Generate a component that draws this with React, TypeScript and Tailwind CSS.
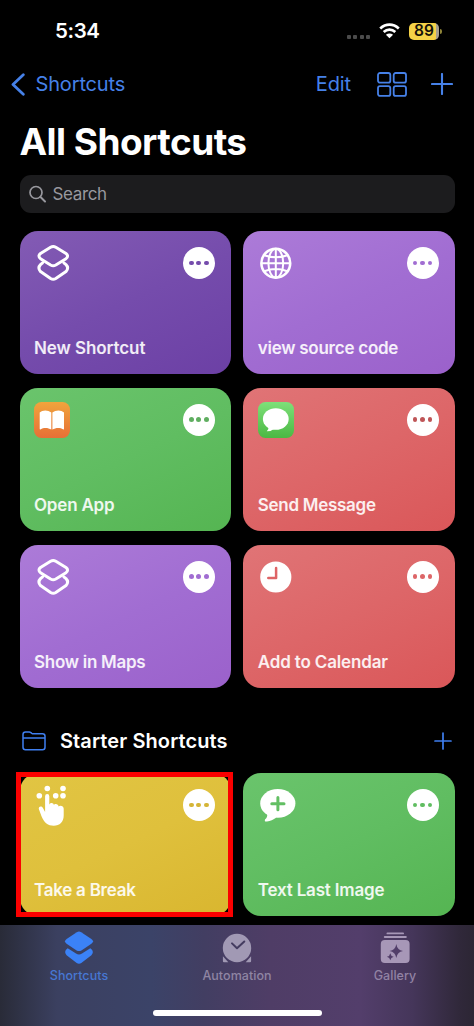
import React from 'react';

type Shortcut = {
  title: string;
  bg: string;
  dots: string;
  tracking: string;
  icon: React.ReactNode;
  highlighted?: boolean;
};

const LayersIcon = () => (
  <svg viewBox="0 0 36 36" className="size-9 overflow-visible" fill="none" stroke="#fff" strokeWidth="3" strokeLinejoin="round" strokeLinecap="round">
    <path d="M16.6 2.2Q19.2 .7 21.8 2.2L32 8.5Q35.2 11 32 13.7L21.8 20Q19.2 21.4 16.6 20L6.5 13.7Q3.4 11 6.5 8.5Z" />
    <path d="M8.6 17.8L6.5 19.6Q3.4 22.8 6.5 26.6L16.6 33.5Q19.2 35.100 21.8 33.5L32 26.6Q35.2 22.8 32 19.6L29.800 17.8" />
  </svg>
);

const GlobeIcon = () => (
  <svg viewBox="0 0 36 36" className="size-9 overflow-visible" fill="none" stroke="#fff" strokeWidth="2">
    <circle cx="17.8" cy="18.2" r="14.4" strokeWidth="2.6" />
    <ellipse cx="17.8" cy="18.2" rx="7.4" ry="14.4" />
    <path d="M17.8 4V32.5M3.4 18.2H32.2M6.3 10.2Q17.8 14.5 29.3 10.2M6.3 26.2Q17.8 21.9 29.3 26.2" />
  </svg>
);

const BooksIcon = () => (
  <svg viewBox="0 0 36 36" className="size-9">
    <defs>
      <linearGradient id="books" x1="0" y1="0" x2="0" y2="1">
        <stop stopColor="#f0a43c" />
        <stop offset="1" stopColor="#e76f36" />
      </linearGradient>
    </defs>
    <rect width="36" height="36" rx="7.5" fill="url(#books)" />
    <path fill="#fff" d="M5.7 10.5C8.5 7.8 14 7.8 17.3 10.5V27.5C14 25.3 9 25.5 6.8 27.3Q5.700 28 5.7 26.8ZM30 10.5C27.2 7.8 21.7 7.8 18.4 10.5V27.5C21.7 25.3 26.7 25.5 28.9 27.3Q30 28 30 26.8Z" />
  </svg>
);

const MessagesIcon = () => (
  <svg viewBox="0 0 36 36" className="size-9">
    <defs>
      <linearGradient id="messages" x1="0" y1="0" x2="0" y2="1">
        <stop stopColor="#7ee079" />
        <stop offset="1" stopColor="#4bb843" />
      </linearGradient>
    </defs>
    <rect width="36" height="36" rx="7.5" fill="url(#messages)" />
    <ellipse cx="17.8" cy="17" rx="12.9" ry="10.8" fill="#fff" />
    <path fill="#fff" d="M10.5 24.5Q11 27.5 8.8 29.3Q13.5 29.4 16.5 26.5Z" />
  </svg>
);

const ClockIcon = () => (
  <svg viewBox="0 0 36 36" className="size-9">
    <circle cx="17.8" cy="18" r="15.6" fill="#fff" />
    <path d="M18.1 9V19H10.3" fill="none" stroke="#de6466" strokeWidth="2.5" strokeLinecap="round" strokeLinejoin="round" />
  </svg>
);

const TapIcon = () => (
  <svg viewBox="0 0 36 36" className="size-9 overflow-visible" fill="#fff">
    <circle cx="13.3" cy="1.5" r="2.8" />
    <circle cx="29" cy="1.5" r="2.8" />
    <circle cx="5.3" cy="8.8" r="2.8" />
    <circle cx="21.7" cy="8.8" r="2.8" />
    <circle cx="29" cy="8.8" r="2.8" />
    <path d="M11.1 9.2A2.1 2.1 0 0 1 15.3 9.2V17.7C15.8 15.3 19.8 15.4 19.9 18.1C20.7 16.2 24.5 16.8 24.6 19.5C26 17.9 29.7 18.7 29.7 21.8V28.5C29.7 35 25.8 38.7 19.7 38.7C14 38.7 10.2 36 7.5 29.3L4.9 22.2C4 19.4 7.5 18.3 8.8 20.7L11.1 25Z" />
  </svg>
);

const BubblePlusIcon = () => (
  <svg viewBox="0 0 36 36" className="size-9 overflow-visible">
    <ellipse cx="19.8" cy="16.4" rx="17.6" ry="14.3" fill="#fff" />
    <path d="M9 26.5Q10 30.3 7 32.4C6.4 34.2 7.2 34.9 9 34.5C12.5 34.2 15 32.8 18.5 30.5Z" fill="#fff" />
    <path d="M19.9 10.6V22.8M13.8 16.7H26" stroke="#62bf63" strokeWidth="3" strokeLinecap="round" />
  </svg>
);

const PURPLE = 'bg-linear-[155deg,#ac7bd8,#a16dd2_50%,#9b61cb]';
const GREEN = 'bg-linear-[155deg,#6ac46c,#60bd61_50%,#55b552]';
const RED = 'bg-linear-[155deg,#e07476,#dd6668_50%,#da5759]';

const allShortcuts: Shortcut[] = [
  { title: 'New Shortcut', bg: 'bg-linear-[155deg,#835bb4,#754cac_50%,#6c40a5]', dots: 'bg-[#754cac]', tracking: 'tracking-[-0.08px]', icon: <LayersIcon /> },
  { title: 'view source code', bg: PURPLE, dots: 'bg-[#a16dd2]', tracking: 'tracking-[-0.25px]', icon: <GlobeIcon /> },
  { title: 'Open App', bg: GREEN, dots: 'bg-[#5fae60]', tracking: 'tracking-[-0.2px]', icon: <BooksIcon /> },
  { title: 'Send Message', bg: RED, dots: 'bg-[#bf5557]', tracking: 'tracking-[-0.28px]', icon: <MessagesIcon /> },
  { title: 'Show in Maps', bg: PURPLE, dots: 'bg-[#a16dd2]', tracking: 'tracking-[-0.28px]', icon: <LayersIcon /> },
  { title: 'Add to Calendar', bg: RED, dots: 'bg-[#dd6668]', tracking: 'tracking-[-0.15px]', icon: <ClockIcon /> },
];

const starterShortcuts: Shortcut[] = [
  { title: 'Take a Break', bg: 'bg-linear-[155deg,#e1c543,#dfc03c_50%,#d9b62f]', dots: 'bg-[#d5b537]', tracking: 'tracking-[-0.25px]', icon: <TapIcon />, highlighted: true },
  { title: 'Text Last Image', bg: GREEN, dots: 'bg-[#60bd61]', tracking: 'tracking-[-0.18px]', icon: <BubblePlusIcon /> },
];

function ShortcutCard({ shortcut }: { shortcut: Shortcut }) {
  const { title, bg, dots, tracking, icon, highlighted } = shortcut;
  return (
    <div className={`relative flex h-[143px] flex-col justify-between rounded-[18px] pt-[14px] pr-4 pb-[14px] pl-[14.5px] ${bg}`}>
      <div className="flex items-start justify-between">
        {icon}
        <button className="mt-0.5 flex size-8 items-center justify-center gap-[2.8px] rounded-full bg-white">
          <span className={`size-[4.8px] rounded-full ${dots}`} />
          <span className={`size-[4.8px] rounded-full ${dots}`} />
          <span className={`size-[4.8px] rounded-full ${dots}`} />
        </button>
      </div>
      <span className={`text-[17px] leading-6 font-semibold whitespace-nowrap text-white/90 ${tracking}`}>{title}</span>
      {highlighted && <div className="absolute -top-px -right-[2px] -bottom-px -left-[3.5px] border-[5px] border-[#fb0000]" />}
    </div>
  );
}

function ShortcutGrid({ items }: { items: Shortcut[] }) {
  return (
    <div className="grid grid-cols-2 gap-x-[12.5px] gap-y-[13.8px]">
      {items.map((item) => (
        <ShortcutCard key={item.title} shortcut={item} />
      ))}
    </div>
  );
}

function StatusBar() {
  return (
    <div className="flex h-[62px] items-center justify-between pr-[32px] pl-[55px]">
      <span className="text-[20.5px] leading-6 font-semibold tracking-[-0.4px]">5:34</span>
      <div className="flex items-center">
        <div className="mt-[11px] mr-[9px] flex gap-[2.5px]">
          <span className="size-[4px] rounded-[1px] bg-[#4b4b4b]" />
          <span className="size-[4px] rounded-[1px] bg-[#4b4b4b]" />
          <span className="size-[4px] rounded-[1px] bg-[#4b4b4b]" />
          <span className="size-[4px] rounded-[1px] bg-[#4b4b4b]" />
        </div>
        <svg width="21" height="16" viewBox="0 0 21 16" fill="none" stroke="#fff" strokeWidth="2.7">
          <path d="M1.2 5.4Q5.5 1.6 10.5 1.6T19.8 5.4M4.7 9Q7.3 6.600 10.5 6.6T16.3 9" />
          <path d="M10.5 15.3L6.9 11.7Q10.5 9.3 14.1 11.7Z" fill="#fff" stroke="none" />
        </svg>
        <div className="ml-[9px] flex h-[17px] w-[30px] items-center justify-center rounded-[5px] bg-linear-to-r from-[#f5d247] from-90% to-[#a8a190] to-90% text-[15.5px] font-semibold text-[#15120a]">
          89
        </div>
        <span className="ml-[1px] h-[5px] w-[2px] rounded-r-full bg-[#8f8538]" />
      </div>
    </div>
  );
}

function TabItem({ label, color, children }: { label: string; color: string; children: React.ReactNode }) {
  return (
    <button className={`flex flex-1 flex-col items-center ${color}`}>
      {children}
      <span className="mt-px text-[12.5px] leading-4 font-medium tracking-[0.05px]">{label}</span>
    </button>
  );
}

function TabBar() {
  return (
    <nav className="flex h-[101px] flex-col justify-between bg-[linear-gradient(90deg,#292b38_0%,#3b4060_12%,#3b4368_32%,#423e62_43%,#4f3d66_57%,#533e6b_76%,#45365a_87%,#30283a_97%,#2c2634_100%)] pt-[5px] pb-[10px]">
      <div className="flex">
        <TabItem label="Shortcuts" color="text-[#4777d3]">
          <svg width="30" height="37" viewBox="0 0 30 37" fill="#3b82f7">
            <path d="M12.8 2.2Q15 1 17.2 2.2L27.4 8.9Q30.6 11.2 27.4 13.7L17.4 20.4Q15 21.8 12.6 20.4L2.6 13.7Q-.6 11.2 2.6 8.9Z" />
            <path d="M3.7 18.2L12 23.6Q15 25.3 18 23.6L26.3 18.2Q30.8 21.3 27.4 25.2L17.3 33Q15 34.5 12.7 33L2.6 25.2Q-.8 21.3 3.7 18.2Z" />
          </svg>
        </TabItem>
        <TabItem label="Automation" color="text-[#8f85a3]">
          <svg width="30" height="37" viewBox="0 0 30 37" fill="#a199b4">
            <circle cx="15" cy="18" r="14.2" />
            <path d="M.9 26.3L6.3 32.2H2Q.9 32.2 .9 31ZM29.1 26.3L23.7 32.2H28Q29.1 32.2 29.1 31Z" />
            <path d="M10 13.4L15 18.3L22.3 11.5" fill="none" stroke="#443c60" strokeWidth="2" strokeLinecap="round" strokeLinejoin="round" />
          </svg>
        </TabItem>
        <TabItem label="Gallery" color="text-[#9283a4]">
          <svg width="30" height="37" viewBox="0 0 30 37" fill="#a797b7">
            <rect x="6.5" y="2.5" width="17.5" height="1.8" rx=".9" />
            <rect x="3.8" y="6" width="23" height="2.1" rx="1" />
            <rect x=".8" y="10" width="28.8" height="23" rx="4" />
            <path fill="#523e69" d="M16.3 14Q17.2 20.1 23 21Q17.2 21.9 16.3 28Q15.4 21.9 9.6 21Q15.4 20.1 16.3 14ZM10.3 23.3Q10.8 26.3 13.7 26.8Q10.8 27.3 10.3 30.3Q9.8 27.3 6.9 26.8Q9.8 26.3 10.3 23.3Z" />
          </svg>
        </TabItem>
      </div>
      <div className="mx-auto h-[6px] w-[169px] rounded-full bg-white" />
    </nav>
  );
}

function App() {
  return (
    <div className="flex h-[1026px] w-[474px] flex-col overflow-hidden bg-black font-['Inter','Liberation_Sans',sans-serif] text-white">
      <StatusBar />

      <header className="flex h-[44px] items-center pr-[21px] pl-[11px] text-[20px] text-[#4681e8]">
        <svg width="14" height="23" viewBox="0 0 14 23" fill="none" stroke="currentColor" strokeWidth="2.8" strokeLinecap="round" strokeLinejoin="round">
          <path d="M12.3 1.7L2 11.5L12.3 21.3" />
        </svg>
        <span className="ml-[10.5px] tracking-[-0.15px]">Shortcuts</span>
        <span className="ml-auto tracking-[-0.1px]">Edit</span>
        <svg className="ml-[26px]" width="30" height="25" viewBox="0 0 30 25" fill="none" stroke="currentColor" strokeWidth="1.8">
          <rect x="1" y="1" width="12.3" height="9.7" rx="2" />
          <rect x="16.7" y="1" width="12.3" height="9.7" rx="2" />
          <rect x="1" y="14.2" width="12.3" height="9.7" rx="2" />
          <rect x="16.7" y="14.2" width="12.3" height="9.7" rx="2" />
        </svg>
        <svg className="ml-[24px]" width="22" height="22" viewBox="0 0 22 22" fill="none" stroke="currentColor" strokeWidth="2.1" strokeLinecap="round">
          <path d="M11 1V21M1 11H21" />
        </svg>
      </header>

      <main className="flex-1 px-[19.5px]">
        <h1 className="pt-[14px] text-[37px] leading-[44px] font-bold tracking-[-0.55px] whitespace-nowrap">All Shortcuts</h1>

        <div className="mt-[11px] flex h-[38px] items-center rounded-[11px] bg-[#1c1c1e] pl-[9px] text-[17px] text-[#98989e]">
          <svg width="17" height="18" viewBox="0 0 17 18" fill="none" stroke="currentColor" strokeWidth="1.7" strokeLinecap="round">
            <circle cx="7" cy="7.5" r="6" />
            <path d="M11.5 12L16 16.5" strokeWidth="2" />
          </svg>
          <span className="mt-px ml-[7px] tracking-[-0.35px]">Search</span>
        </div>

        <div className="mt-[18px]">
          <ShortcutGrid items={allShortcuts} />
        </div>

        <div className="mt-[34px] mb-[12.4px] flex h-[39px] items-center pr-[3px] pl-[2px] text-[#3f7ff0]">
          <svg width="24" height="20" viewBox="0 0 24 20" fill="none" stroke="currentColor" strokeWidth="1.5">
            <path d="M1 3.5Q1 1 3.5 1H7.2Q8.2 1 9 1.7L9.8 2.3Q10.5 2.8 11.5 2.8H20.5Q23 2.8 23 5.3V16.2Q23 18.7 20.5 18.7H3.5Q1 18.7 1 16.2ZM1 7H23" />
          </svg>
          <h2 className="ml-[14.5px] text-[20px] leading-6 font-semibold tracking-[0.1px] text-white">Starter Shortcuts</h2>
          <svg className="ml-auto" width="18" height="18" viewBox="0 0 18 18" stroke="currentColor" strokeWidth="1.7" strokeLinecap="round">
            <path d="M9 1V17M1 9H17" />
          </svg>
        </div>

        <ShortcutGrid items={starterShortcuts} />
      </main>

      <TabBar />
    </div>
  );
}

export default App;
